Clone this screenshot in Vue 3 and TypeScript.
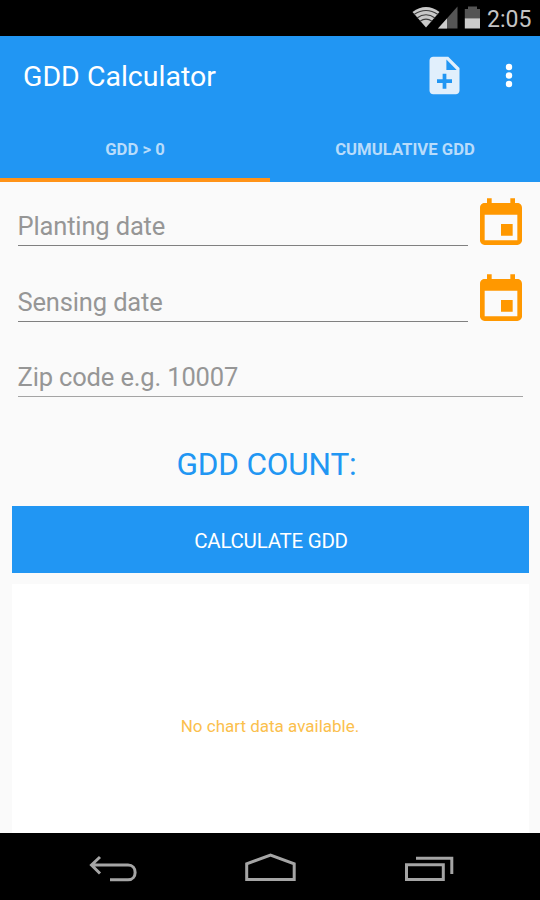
<script setup lang="ts">
import { ref } from 'vue'

interface Field {
  id: string
  hint: string
  picker: boolean
}

const tabs: string[] = ['GDD > 0', 'CUMULATIVE GDD']
const active = ref(0)
const fields: Field[] = [
  { id: 'planting', hint: 'Planting date', picker: true },
  { id: 'sensing', hint: 'Sensing date', picker: true },
  { id: 'zip', hint: 'Zip code e.g. 10007', picker: false },
]
</script>

<template>
  <div class="screen">
    <div class="status">
      <svg class="signals" width="72" height="36" viewBox="0 0 72 36">
        <path d="M4.5 12Q18 2 31.500 12L18 27.500z" fill="#c9c9c9" />
        <g fill="none" stroke="#3c3c3c" stroke-width="1.200">
          <path d="M6 14.500Q18 6.500 30 14.500" />
          <path d="M9 18Q18 11.500 27 18" />
          <path d="M12 21.300Q18 17 24 21.300" />
        </g>
        <path d="M49.500 6.500V28.500H30z" fill="#555" />
        <path d="M39 18.500V28.500H30z" fill="#ccc" />
        <path d="M56.800 9H60V6.500H69V9H72V18.500H56.800z" fill="#545454" />
        <path d="M56.800 18.300H72V28.500H56.800z" fill="#ccc" />
      </svg>
      <span class="clock">2:05</span>
    </div>

    <header class="appbar">
      <div class="toolbar">
        <h1>GDD Calculator</h1>
        <button class="icon-btn" aria-label="New">
          <svg width="45" height="45" viewBox="0 0 24 24">
            <path fill="#e1effc" d="M14 2H6c-1.100 0-1.990.9-1.990 2L4 20c0 1.100.89 2 1.990 2H18c1.100 0 2-.9 2-2V8l-6-6zm2 14h-3v3h-2v-3H8v-2h3v-3h2v3h3v2zm-3-7V3.500L18.500 9H13z" />
          </svg>
        </button>
        <button class="icon-btn more" aria-label="More options">
          <svg width="8" height="26" viewBox="0 0 8 26" fill="#fff">
            <circle cx="4" cy="4" r="3.200" />
            <circle cx="4" cy="12.500" r="3.200" />
            <circle cx="4" cy="21" r="3.200" />
          </svg>
        </button>
      </div>
      <nav class="tabs">
        <button
          v-for="(tab, i) in tabs"
          :key="tab"
          class="tab"
          :class="{ active: active === i }"
          @click="active = i"
        ><span>{{ tab }}</span></button>
      </nav>
    </header>

    <main class="content">
      <div v-for="f in fields" :key="f.id" class="row">
        <div class="input" :class="f.id"><span>{{ f.hint }}</span></div>
        <svg v-if="f.picker" class="calendar" width="56" height="56" viewBox="0 0 24 24">
          <path fill="#ff9800" d="M17 12h-5v5h5v-5zM16 1v2H8V1H6v2H5c-1.110 0-1.990.9-1.990 2L3 19c0 1.100.89 2 2 2h14c1.100 0 2-.9 2-2V5c0-1.100-.9-2-2-2h-1V1h-2zm3 18H5V8h14v11z" />
        </svg>
      </div>
      <div class="count"><span>GDD COUNT:</span></div>
      <button class="calculate"><span>CALCULATE GDD</span></button>
      <section class="chart"><span>No chart data available.</span></section>
    </main>

    <footer class="navbar">
      <svg width="540" height="67" viewBox="0 0 540 67" fill="none" stroke="#a5a5a5" stroke-width="3">
        <path d="M100 24L91.500 32L100 40.500M92 32H128C137.500 32 137.500 46.800 128 46.800H110" />
        <path d="M246.700 46.500V30.800L270.500 22L294.200 30.800V46.500z" />
        <path d="M406.500 31.800H443.300V46.500H406.500zM416 25.300H451.800V41" />
      </svg>
    </footer>
  </div>
</template>

<style>
body {
  margin: 0;
}
</style>

<style scoped>
.screen {
  display: flex;
  flex-direction: column;
  width: 540px;
  height: 900px;
  overflow: hidden;
  background: #fafafa;
  font-family: Roboto, "Liberation Sans", sans-serif;
}

button {
  padding: 0;
  border: 0;
  background: none;
  font-family: inherit;
}

span,
h1 {
  white-space: nowrap;
}

.status {
  display: flex;
  flex: none;
  height: 36px;
  box-sizing: border-box;
  padding-left: 408px;
  background: #000;
}

.clock {
  margin-left: 7px;
  color: #c4c4c4;
  font-size: 23px;
  line-height: 40px;
}

.appbar {
  flex: none;
  height: 146px;
  background: #2196f3;
}

.toolbar {
  display: flex;
  align-items: center;
  height: 79px;
  padding-left: 23px;
}

h1 {
  flex: none;
  width: 399px;
  margin: 0;
  padding-top: 3px;
  color: #fff;
  font-size: 28.500px;
  font-weight: 400;
  line-height: 34px;
}

.icon-btn {
  display: flex;
  flex: none;
}

.more {
  margin-left: 38px;
}

.tabs {
  display: flex;
  height: 67px;
}

.tab {
  display: flex;
  flex: 1;
  justify-content: center;
  padding-top: 24px;
  border-bottom: 4px solid transparent;
  color: #b8dcfb;
  font-size: 16.700px;
  font-weight: 700;
  line-height: 21px;
}

.tab.active {
  border-bottom-color: #ff9318;
}

.content {
  display: flex;
  flex: 1;
  flex-direction: column;
  padding: 9px 11.5px 0;
}

.row {
  display: flex;
  flex: none;
  gap: 6px;
  height: 75.500px;
  padding: 0 0 0 6px;
}

.input {
  flex: 1;
  height: 55px;
  box-sizing: border-box;
  padding-top: 17px;
  border-bottom: 1px solid #808080;
  color: #969696;
  font-size: 25.500px;
  letter-spacing: -0.150px;
  line-height: 36px;
}

.input.zip {
  margin-right: 6px;
  border-bottom-color: #a4a4a4;
}

.calendar {
  flex: none;
  margin: 5px 0 0 -1px;
}

.count {
  flex: none;
  height: 88px;
  padding-right: 7px;
  color: #2196f3;
  font-size: 31.500px;
  letter-spacing: -0.150px;
  line-height: 94px;
  text-align: center;
}

.calculate {
  flex: none;
  height: 67px;
  margin-bottom: 11px;
  padding-left: 2px;
  background: #2196f3;
  color: #fff;
  font-size: 20.500px;
  letter-spacing: -0.250px;
  line-height: 70px;
}

.chart {
  display: flex;
  flex: 1;
  align-items: center;
  justify-content: center;
  padding-top: 35px;
  background: #fff;
  color: #fbc04d;
  font-size: 17px;
}

.navbar {
  flex: none;
  height: 67px;
  background: #000;
}

.navbar svg {
  display: block;
}
</style>
